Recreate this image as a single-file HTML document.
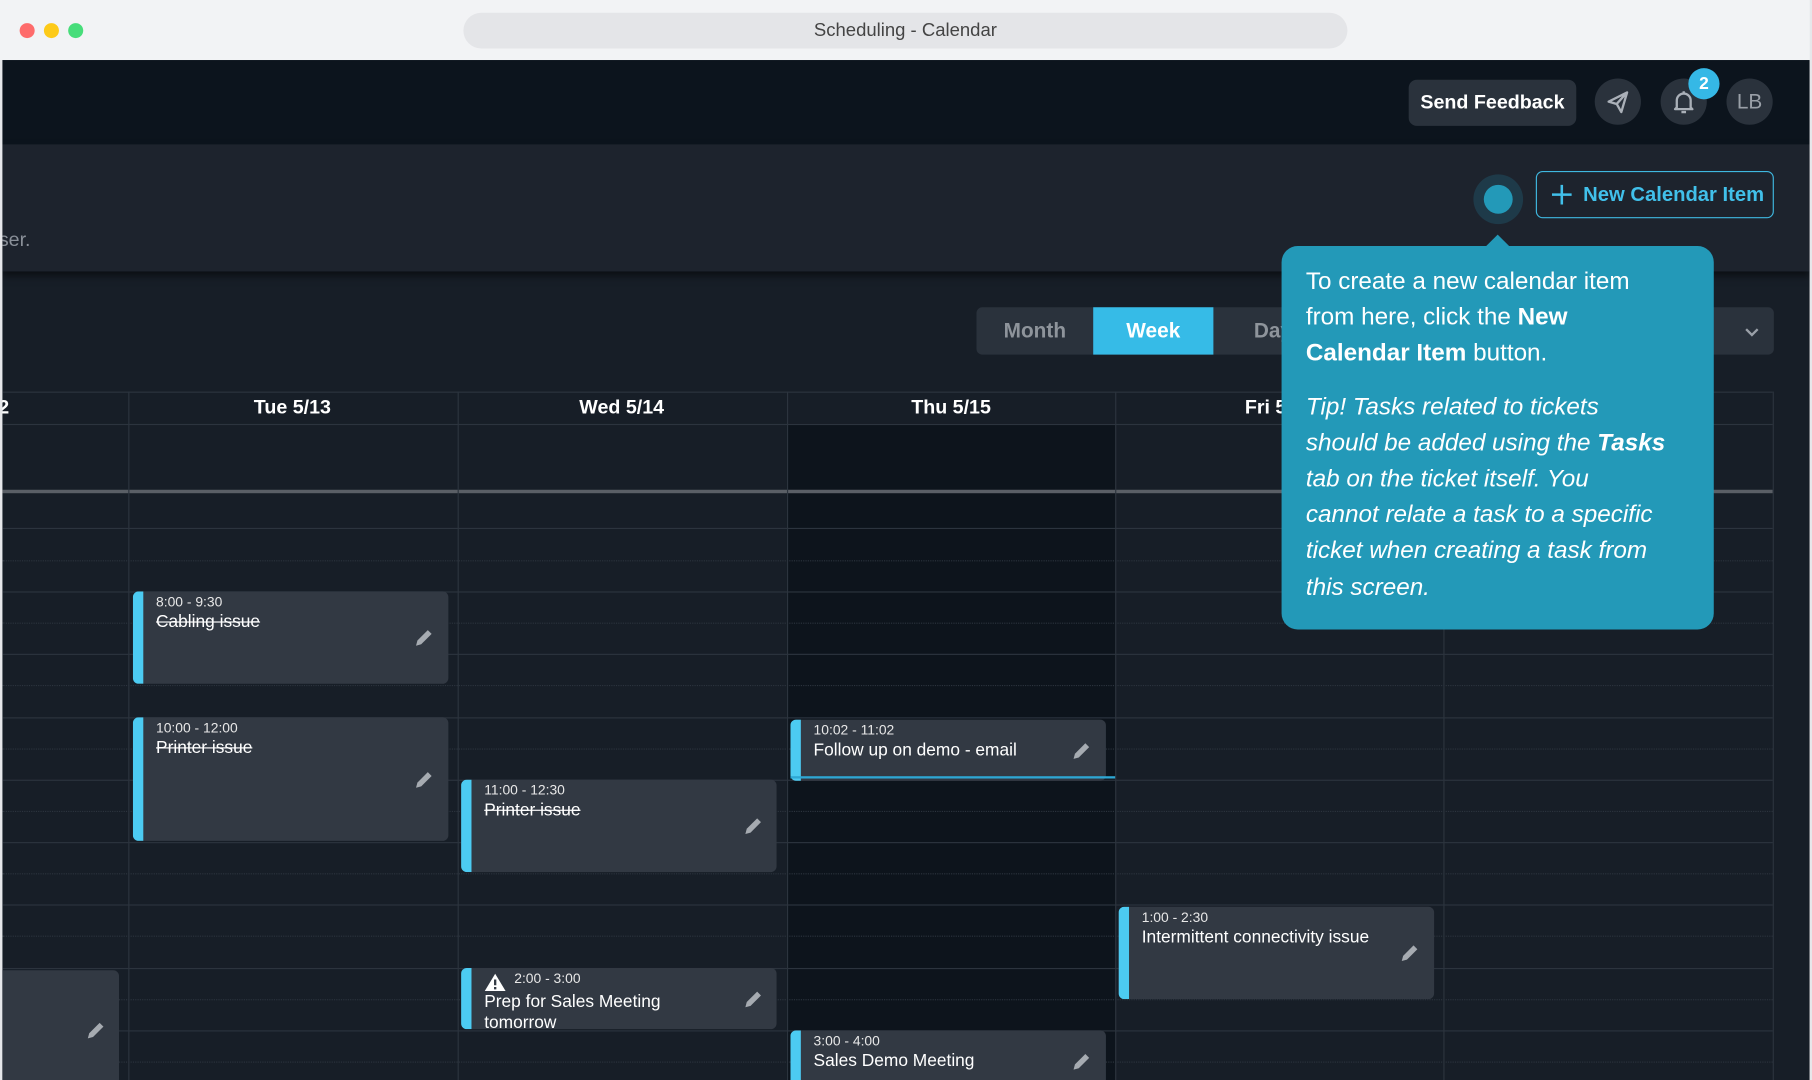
<!DOCTYPE html>
<html><head><meta charset="utf-8"><style>
*{margin:0;padding:0;box-sizing:border-box}
html,body{width:1812px;height:1080px;overflow:hidden;background:#fff;font-family:"Liberation Sans",sans-serif}
#w{position:absolute;left:0;top:0;width:1568px;height:935px;transform:scale(1.15561,1.15508);transform-origin:0 0;overflow:hidden;background:#f2f3f5}
.a{position:absolute}
.ev{position:absolute;background:#323943;border-radius:5px;overflow:hidden;color:#fff}
.ev:before{content:"";position:absolute;left:0;top:0;bottom:0;width:9px;background:#4ccbf2}
.ev .t{position:absolute;left:20px;top:2px;font-size:12px;color:#e8e8e8}
.ev .n{position:absolute;left:20px;top:18px;font-size:15px;line-height:18px}
.ev s{text-decoration:line-through}
.pen{position:absolute;width:20px;height:20px}
.hl{position:absolute;left:2px;width:1532px;height:1px;background:#2c343e}
.dl{position:absolute;left:2px;width:1532px;height:0;border-top:1px dotted #2c343e}
.vl{position:absolute;top:339px;bottom:0;width:1px;background:#2c343e}
.hd{position:absolute;top:343px;width:284px;text-align:center;color:#fff;font-weight:bold;font-size:17px}
.cb{position:absolute;width:40px;height:40px;border-radius:50%;background:#2a323c}
</style></head><body><div id="w">
<div class="a" style="left:17px;top:20px;width:13px;height:13px;border-radius:50%;background:#fe6b6b"></div>
<div class="a" style="left:38px;top:20px;width:13px;height:13px;border-radius:50%;background:#fdca19"></div>
<div class="a" style="left:59px;top:20px;width:13px;height:13px;border-radius:50%;background:#47dd7a"></div>
<div class="a" style="left:401px;top:11px;width:765px;height:31px;border-radius:16px;background:#e4e5e8;text-align:center;line-height:31px;font-size:16px;color:#444">Scheduling - Calendar</div>
<div class="a" style="left:2px;top:52px;width:1564px;height:883px;background:#171e27;overflow:hidden">
 <div class="a" style="left:0;top:0;width:1564px;height:73px;background:#0c141d"></div>
 <div class="a" style="left:0;top:73px;width:1564px;height:110px;background:#1d232d;box-shadow:0 4px 6px rgba(0,0,0,.5)"></div>
 <div class="a" style="left:-3px;top:146px;font-size:17px;color:#8a9099">ser.</div>
</div>
<div class="a" style="left:1219px;top:69px;width:145px;height:40px;border-radius:7px;background:#2a323c;color:#fff;font-weight:bold;font-size:17px;text-align:center;line-height:40px">Send Feedback</div>
<div class="cb" style="left:1380px;top:68px"><svg width="40" height="40" viewBox="0 0 40 40"><path d="M12 20 L28 12 L23 29 L19 22 Z M19 22 L28 12" fill="none" stroke="#aab0b8" stroke-width="2" stroke-linejoin="round"/></svg></div>
<div class="cb" style="left:1437px;top:68px"><svg width="40" height="40" viewBox="0 0 40 40"><path d="M14 25 L14 19 a6 6 0 0 1 12 0 L26 25 L27.5 26.5 L12.5 26.5 Z M18 29 h4" fill="none" stroke="#aab0b8" stroke-width="2" stroke-linejoin="round"/><path d="M20 11v2" stroke="#aab0b8" stroke-width="2"/></svg></div>
<div class="a" style="left:1461px;top:59px;width:27px;height:27px;border-radius:50%;background:#35b8e6;color:#fff;font-size:15px;font-weight:bold;text-align:center;line-height:27px">2</div>
<div class="cb" style="left:1494px;top:68px;color:#9aa0a8;font-size:18px;text-align:center;line-height:40px">LB</div>
<div class="a" style="left:1275px;top:151px;width:43px;height:43px;border-radius:50%;background:#1e3a49"></div>
<div class="a" style="left:1284px;top:160px;width:25px;height:25px;border-radius:50%;background:#2399b8"></div>
<div class="a" style="left:1329px;top:148px;width:206px;height:41px;border:1.5px solid #3fb8e0;border-radius:6px;color:#41c0ea;font-weight:bold;font-size:17.5px;line-height:38px;padding-left:40px">New Calendar Item</div>
<svg class="a" style="left:1342px;top:159px" width="19" height="19"><path d="M9.5 1v17M1 9.5h17" stroke="#41c0ea" stroke-width="2.2"/></svg>
<div class="a" style="left:845px;top:266px;width:690px;height:41px;border-radius:5px;background:#2a323c"></div>
<div class="a" style="left:845px;top:266px;width:101px;height:41px;color:#8e949b;font-weight:bold;font-size:18px;text-align:center;line-height:41px">Month</div>
<div class="a" style="left:946px;top:266px;width:104px;height:41px;background:#36bbe7;color:#fff;font-weight:bold;font-size:18px;text-align:center;line-height:41px">Week</div>
<div class="a" style="left:1085px;top:266px;color:#8e949b;font-weight:bold;font-size:18px;line-height:41px">Day</div>
<svg class="a" style="left:1509px;top:283px" width="14" height="10"><path d="M2 2l5 5 5-5" fill="none" stroke="#9aa0a8" stroke-width="2"/></svg>
<div class="a" style="left:681px;top:367px;width:284px;height:568px;background:#0d141c"></div>
<div class="hl" style="top:339px"></div>
<div class="hl" style="top:367px"></div>
<div class="a" style="left:2px;top:424px;width:1532px;height:3px;background:#5a5f66"></div>
<div class="hl" style="top:457px"></div><div class="dl" style="top:485px"></div>
<div class="hl" style="top:512px"></div><div class="dl" style="top:539px"></div>
<div class="hl" style="top:566px"></div><div class="dl" style="top:593px"></div>
<div class="hl" style="top:621px"></div><div class="dl" style="top:648px"></div>
<div class="hl" style="top:675px"></div><div class="dl" style="top:702px"></div>
<div class="hl" style="top:729px"></div><div class="dl" style="top:756px"></div>
<div class="hl" style="top:783px"></div><div class="dl" style="top:810px"></div>
<div class="hl" style="top:838px"></div><div class="dl" style="top:865px"></div>
<div class="hl" style="top:892px"></div><div class="dl" style="top:919px"></div>
<div class="vl" style="left:111px"></div><div class="vl" style="left:396px"></div><div class="vl" style="left:681px"></div><div class="vl" style="left:965px"></div><div class="vl" style="left:1249px"></div><div class="vl" style="left:1534px"></div>
<div class="hd" style="left:-140px;text-align:right;width:148px">2</div>
<div class="hd" style="left:111px">Tue 5/13</div>
<div class="hd" style="left:396px">Wed 5/14</div>
<div class="hd" style="left:681px">Thu 5/15</div>
<div class="hd" style="left:965px">Fri 5/16</div>
<div class="ev" style="left:115px;top:512px;width:273px;height:80px"><div class="t">8:00 - 9:30</div><div class="n"><s>Cabling issue</s></div></div>
<div class="ev" style="left:115px;top:621px;width:273px;height:107px"><div class="t">10:00 - 12:00</div><div class="n"><s>Printer issue</s></div></div>
<div class="ev" style="left:399px;top:675px;width:273px;height:80px"><div class="t">11:00 - 12:30</div><div class="n"><s>Printer issue</s></div></div>
<div class="ev" style="left:684px;top:623px;width:273px;height:53px"><div class="t">10:02 - 11:02</div><div class="n">Follow up on demo - email</div></div>
<div class="a" style="left:684px;top:672px;width:281px;height:2px;background:#2ea7d4"></div>
<div class="ev" style="left:968px;top:785px;width:273px;height:80px"><div class="t">1:00 - 2:30</div><div class="n">Intermittent connectivity issue</div></div>
<div class="ev" style="left:399px;top:838px;width:273px;height:53px"><div class="t" style="left:46px">2:00 - 3:00</div><div class="n" style="top:21px">Prep for Sales Meeting<br>tomorrow</div>
 <svg class="a" style="left:20px;top:4px" width="19" height="17"><path d="M9.5 1L18.5 16H0.5Z" fill="#fff"/><path d="M9.5 6v5M9.5 12.5v2" stroke="#323943" stroke-width="2"/></svg></div>
<div class="ev" style="left:684px;top:892px;width:273px;height:60px"><div class="t">3:00 - 4:00</div><div class="n">Sales Demo Meeting</div></div>
<div class="ev" style="left:-10px;top:840px;width:113px;height:110px"></div>
<svg class="pen" style="left:357px;top:542px" viewBox="0 0 20 20"><path d="M3 17l1.2-4.5 9-9 3.3 3.3-9 9z" fill="#a6abb1"/></svg>
<svg class="pen" style="left:357px;top:665px" viewBox="0 0 20 20"><path d="M3 17l1.2-4.5 9-9 3.3 3.3-9 9z" fill="#a6abb1"/></svg>
<svg class="pen" style="left:642px;top:705px" viewBox="0 0 20 20"><path d="M3 17l1.2-4.5 9-9 3.3 3.3-9 9z" fill="#a6abb1"/></svg>
<svg class="pen" style="left:926px;top:640px" viewBox="0 0 20 20"><path d="M3 17l1.2-4.5 9-9 3.3 3.3-9 9z" fill="#a6abb1"/></svg>
<svg class="pen" style="left:1210px;top:815px" viewBox="0 0 20 20"><path d="M3 17l1.2-4.5 9-9 3.3 3.3-9 9z" fill="#a6abb1"/></svg>
<svg class="pen" style="left:642px;top:855px" viewBox="0 0 20 20"><path d="M3 17l1.2-4.5 9-9 3.3 3.3-9 9z" fill="#a6abb1"/></svg>
<svg class="pen" style="left:926px;top:909px" viewBox="0 0 20 20"><path d="M3 17l1.2-4.5 9-9 3.3 3.3-9 9z" fill="#a6abb1"/></svg>
<svg class="pen" style="left:73px;top:882px" viewBox="0 0 20 20"><path d="M3 17l1.2-4.5 9-9 3.3 3.3-9 9z" fill="#a6abb1"/></svg>
<div class="a" style="left:1289px;top:206px;width:14px;height:14px;background:#2399b8;transform:rotate(45deg)"></div>
<div class="a" style="left:1109px;top:213px;width:374px;height:332px;border-radius:14px;background:#2399b8;color:#fff;font-size:21px;line-height:31.2px;padding:15px 10px 0 21px;white-space:nowrap">
To create a new calendar item<br>from here, click the <b>New</b><br><b>Calendar Item</b> button.
<div style="margin-top:15px;font-style:italic">Tip! Tasks related to tickets<br>should be added using the <b>Tasks</b><br>tab on the ticket itself. You<br>cannot relate a task to a specific<br>ticket when creating a task from<br>this screen.</div>
</div>
<div class="a" style="left:0;top:52px;width:2px;height:883px;background:#e6e7ea"></div>
<div class="a" style="left:1566px;top:0;width:2px;height:935px;background:#e6e7ea"></div>
</div></body></html>
